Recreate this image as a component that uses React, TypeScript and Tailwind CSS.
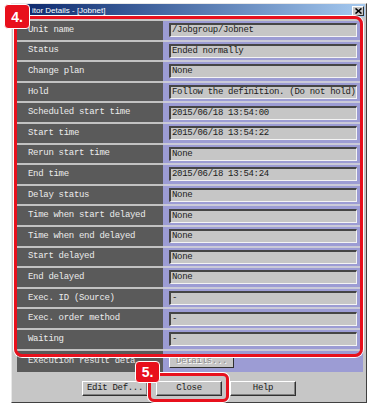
import React from "react";

const rows: [string, string][] = [
  ["Unit name", "/Jobgroup/Jobnet"],
  ["Status", "Ended normally"],
  ["Change plan", "None"],
  ["Hold", "Follow the definition. (Do not hold)"],
  ["Scheduled start time", "2015/06/18 13:54:00"],
  ["Start time", "2015/06/18 13:54:22"],
  ["Rerun start time", "None"],
  ["End time", "2015/06/18 13:54:24"],
  ["Delay status", "None"],
  ["Time when start delayed", "None"],
  ["Time when end delayed", "None"],
  ["Start delayed", "None"],
  ["End delayed", "None"],
  ["Exec. ID (Source)", "-"],
  ["Exec. order method", "-"],
  ["Waiting", "-"],
];

const mono = "font-['Liberation_Mono','DejaVu_Sans_Mono',monospace] text-[9px] leading-none tracking-[-0.3px]";

function Btn({ label }: { label: string }) {
  return (
    <div className={`w-[66px] h-[15px] bg-[#c6c6c6] border border-t-white border-l-white border-r-[#303030] border-b-[#303030] shadow-[inset_-1px_-1px_0_#808080] flex items-center justify-center text-[#202020] ${mono}`}>
      {label}
    </div>
  );
}

export default function App() {
  return (
    <div className="relative w-[371px] h-[407px] bg-white overflow-hidden pt-[3px] pl-[11px]">
      <div className="w-[356px] h-[400px] bg-[#c6c6c6] border border-t-[#e8e8e8] border-l-[#e8e8e8] border-r-[#404040] border-b-[#404040] flex flex-col">
        <div className="mx-px h-[13px] bg-gradient-to-r from-[#0a246a] to-[#a6caf0] flex items-center justify-between pl-[19px]">
          <span className="font-['Liberation_Sans',Arial,sans-serif] text-[8px] leading-none text-white">
            itor Details - [Jobnet]
          </span>
          <div className="mr-[1px] w-[12px] h-[10px] bg-[#c6c6c6] border border-t-white border-l-white border-r-[#303030] border-b-[#303030] flex items-center justify-center">
            <svg width="7" height="6" viewBox="0 0 7 6">
              <path d="M0.5 0.5 L6.5 5.5 M6.5 0.5 L0.5 5.5" stroke="#000" strokeWidth="1.6" />
            </svg>
          </div>
        </div>

        <div className="mt-[4px] ml-[5px] w-[346px] h-[351px] flex flex-col">
          {rows.map(([label, value]) => (
            <div key={label} className="flex h-[20.6px] shrink-0">
              <div className={`w-[146px] bg-[#5a5a5a] border-b-2 border-[#c2c2c2] flex items-center pl-[11px] text-[#ececec] ${mono}`}>
                {label}
              </div>
              <div className="flex-1 bg-[#9c9cd4] border-b-2 border-[#cacad8] flex items-center">
                <div className={`ml-[6px] w-[188px] h-[14px] bg-[#c6c6c6] border-t-2 border-l-2 border-r border-b border-t-[#454545] border-l-[#454545] border-r-[#f4f4f4] border-b-[#f4f4f4] flex items-center pl-[1px] overflow-hidden whitespace-nowrap text-[#202020] ${mono}`}>
                  {value}
                </div>
              </div>
            </div>
          ))}
          <div className="flex flex-1">
            <div className={`w-[146px] bg-[#5a5a5a] flex items-center pl-[11px] text-[#e4e4e4] whitespace-nowrap overflow-hidden ${mono}`}>
              Execution result deta
            </div>
            <div className="flex-1 bg-[#9c9cd4] flex items-center">
              <div className={`ml-[6px] w-[65px] h-[14px] bg-[#c6c6c6] border border-t-white border-l-white border-r-[#303030] border-b-[#303030] flex items-center justify-center text-[#8a8a8a] [text-shadow:1px_1px_0_#ffffff] ${mono}`}>
                Details...
              </div>
            </div>
          </div>
        </div>

        <div className="mt-[9px] flex justify-center gap-[8px]">
          <Btn label="Edit Def..." />
          <Btn label="Close" />
          <Btn label="Help" />
        </div>
      </div>

      {/* Annotation 4 */}
      <div className="absolute left-[14px] top-[16px] w-[349px] h-[341px] border-[3px] border-[#e8101c] rounded-[8px] shadow-[0_0_0_1px_#ffffff]" />
      <div className="absolute left-[4px] top-[4px] w-[26px] h-[25px] bg-[#e8101c] rounded-[4px] border-[1.5px] border-white flex items-center justify-center text-white font-['Liberation_Sans',Arial,sans-serif] text-[14px] font-bold leading-none">
        4.
      </div>

      {/* Annotation 5 */}
      <div className="absolute left-[148px] top-[373px] w-[81px] h-[29px] border-[3px] border-[#e8101c] rounded-[6px] shadow-[0_0_0_1px_#ffffff]" />
      <div className="absolute left-[135px] top-[361px] w-[25px] h-[22px] bg-[#e8101c] rounded-[4px] border-[1.5px] border-white flex items-center justify-center text-white font-['Liberation_Sans',Arial,sans-serif] text-[14px] font-bold leading-none">
        5.
      </div>
    </div>
  );
}
